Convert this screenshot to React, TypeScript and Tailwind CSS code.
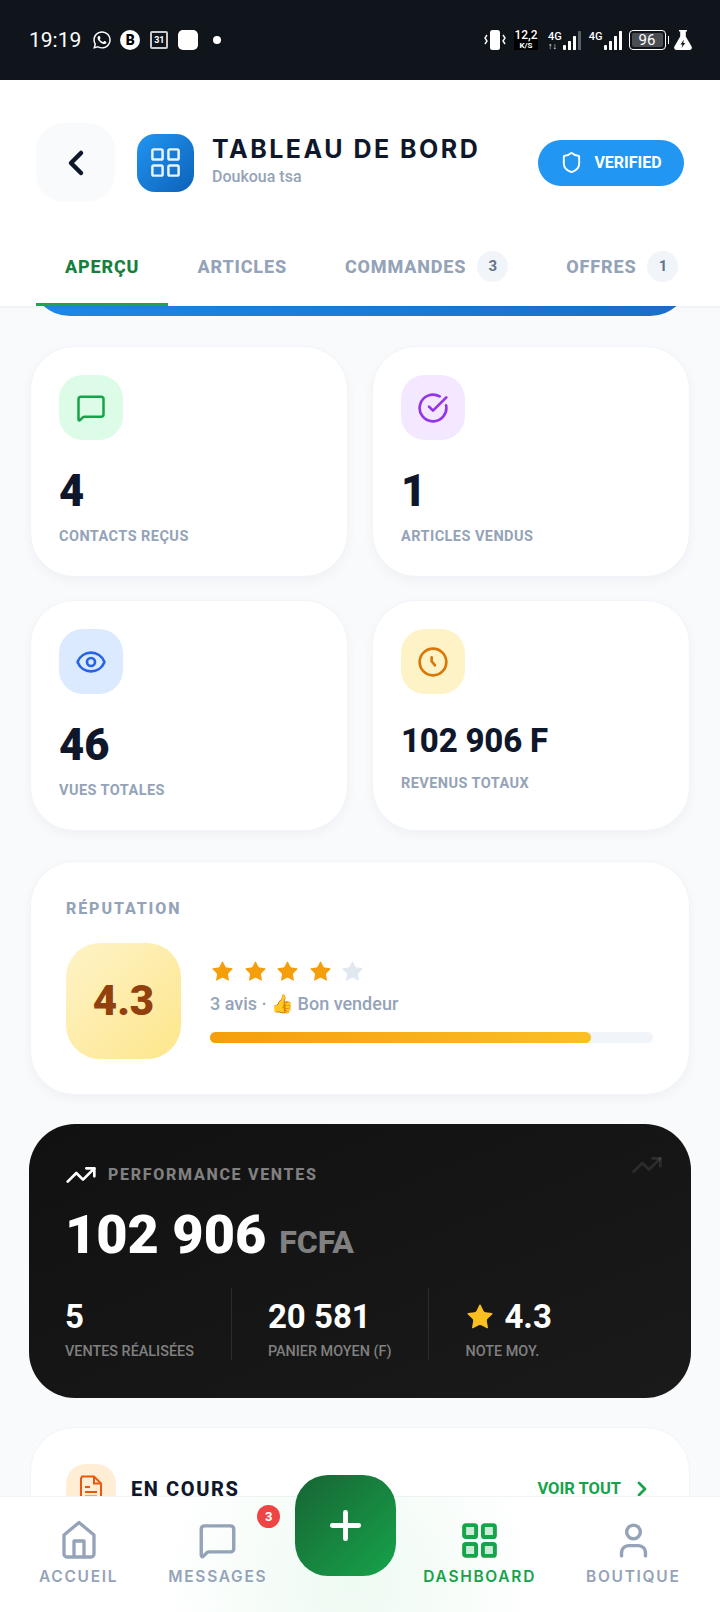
import { CircleCheckBig, ChevronLeft, ChevronRight, Eye, LayoutGrid, MessageSquare, Plus, Shield, Star, TrendingUp, User } from 'lucide-react'
import { FaWhatsapp } from 'react-icons/fa'

function Signal({ dim }: { dim?: boolean }) {
  return (
    <svg width="19" height="19" viewBox="0 0 19 19" fill="#fff">
      <rect x="0" y="14" width="3" height="5" rx="1" />
      <rect x="5" y="10" width="3" height="9" rx="0.5" />
      <rect x="10" y="5" width="3" height="14" rx="0.5" />
      <rect x="15" y="0" width="3" height="19" rx="0.5" fill={dim ? '#5b6067' : '#fff'} />
    </svg>
  )
}

function StatusBar() {
  return (
    <div className="flex h-[80px] shrink-0 items-center justify-between bg-[#10151c] pl-[29px] pr-[28px] text-white">
      <div className="flex items-center">
        <span className="text-[21px] leading-none">19:19</span>
        <FaWhatsapp className="ml-[11px] text-[20px]" />
        <span className="ml-[8px] flex h-[20px] w-[20px] items-center justify-center rounded-full bg-white text-[14px] font-black leading-none text-black">B</span>
        <span className="ml-[10px] flex h-[18px] w-[18px] items-center justify-center rounded-[2px] border-2 border-[#c9cbce] text-[9px] font-bold leading-none">31</span>
        <span className="ml-[10px] h-[20px] w-[20px] rounded-[5px] bg-white" />
        <span className="ml-[15px] h-[8px] w-[8px] rounded-full bg-white" />
      </div>
      <div className="flex items-center">
        <svg width="22" height="20" viewBox="0 0 22 20" fill="none">
          <rect x="6" y="0" width="10" height="20" rx="2.5" fill="#fff" />
          <path d="M3 5 1 8l2 3-2 3M19 5l2 3-2 3 2 3" stroke="#fff" strokeWidth="1.4" />
        </svg>
        <span className="ml-[8px] flex w-[24px] flex-col items-center bg-black text-[12px] font-medium leading-[11px]">
          <span>12,2</span>
          <span className="text-[8px] font-bold leading-[9px]">K/S</span>
        </span>
        <span className="ml-[10px] flex flex-col text-[11px] font-medium leading-[11px]">
          <span>4G</span>
          <span className="text-[9px] font-bold leading-[8px]">↑↓</span>
        </span>
        <span className="ml-[1px]"><Signal dim /></span>
        <span className="ml-[7px] self-start pt-[1px] text-[11px] font-medium leading-[11px]">4G</span>
        <span className="ml-[1px]"><Signal /></span>
        <span className="ml-[6px] flex h-[20px] w-[37px] items-center justify-center rounded-[4px] border-[1.5px] border-white p-[2px]">
          <span className="flex h-full w-full items-center justify-center rounded-[2px] bg-[#4a4d52] text-[15px] leading-none">96</span>
        </span>
        <span className="ml-[2px] h-[8px] w-[1.5px] bg-white" />
        <svg className="ml-[5px]" width="18" height="20" viewBox="0 0 18 20" fill="#fff">
          <path d="M5 0h8v1.5h-1.2v5L17.6 16.6c.8 1.5-.2 3.4-2 3.4H2.4c-1.8 0-2.8-1.9-2-3.4L6.200 6.500v-5H5z" />
          <path d="M10 9.500 6.500 14.500h2l-1 3.500 3.800-5h-2.100z" fill="#10151c" />
        </svg>
      </div>
    </div>
  )
}

function Tab({ label, count, active }: { label: string; count?: number; active?: boolean }) {
  return (
    <div className={`flex h-[79px] items-center gap-[11px] border-b-[3px] px-[29px] pt-[3px] ${active ? 'border-[#22a054]' : 'border-transparent'}`}>
      <span className={`text-[18px] font-extrabold leading-none tracking-[0.85px] ${active ? 'text-[#15803d]' : 'text-[#94a3b8]'}`}>{label}</span>
      {count !== undefined && (
        <span className="flex h-[31px] w-[31px] items-center justify-center rounded-full bg-[#f1f5f9] text-[15px] font-bold text-[#64748b]">{count}</span>
      )}
    </div>
  )
}

function Header() {
  return (
    <div className="relative z-10 shrink-0 bg-white pt-[43px] shadow-[0_1px_3px_rgba(15,23,42,0.06)]">
      <div className="flex items-center pl-[36px] pr-[36px]">
        <div className="flex h-[79px] w-[79px] items-center justify-center rounded-[28px] bg-[#f8fafc]">
          <ChevronLeft size={40} strokeWidth={2.7} className="text-[#0f172a]" />
        </div>
        <div className="ml-[22px] flex h-[58px] w-[57px] items-center justify-center rounded-[18px] bg-gradient-to-br from-[#2196f3] to-[#0d62b8]">
          <LayoutGrid size={35} strokeWidth={1.7} className="text-[#e8f3fc]" />
        </div>
        <div className="mb-[6px] ml-[18px] flex-1">
          <div className="font-[Inter,sans-serif] text-[25px] font-bold leading-[34px] tracking-[2.500px] text-[#0f172a]">TABLEAU DE BORD</div>
          <div className="text-[16px] font-medium leading-[22px] text-[#94a3b8]">Doukoua tsa</div>
        </div>
        <div className="flex h-[46px] w-[146px] items-center justify-center gap-[11px] rounded-[23px] bg-[#2196f3] text-white">
          <Shield size={23} strokeWidth={2} />
          <span className="text-[16px] font-bold leading-none">VERIFIED</span>
        </div>
      </div>
      <div className="mt-[25px] flex pl-[36px]">
        <Tab label="APERÇU" active />
        <Tab label="ARTICLES" />
        <Tab label="COMMANDES" count={3} />
        <Tab label="OFFRES" count={1} />
      </div>
    </div>
  )
}

function StatCard({ icon, tint, value, label, small }: { icon: React.ReactNode; tint: string; value: string; label: string; small?: boolean }) {
  return (
    <div className="h-[231px] rounded-[44px] border border-[#f1f5f9] bg-white pl-[28px] pt-[28px] shadow-[0_4px_12px_rgba(15,23,42,0.04)]">
      <div className={`flex h-[65px] w-[64px] items-center justify-center rounded-[24px] ${tint}`}>{icon}</div>
      {small ? (
        <div className="mt-[24px] text-[33px] font-extrabold leading-[46px] tracking-[-0.2px] text-[#0f172a]">{value}</div>
      ) : (
        <div className="mt-[24px] text-[43.500px] font-black leading-[56px] text-[#0f172a]">{value}</div>
      )}
      <div className={`text-[14.500px] font-bold leading-[20px] tracking-[0.45px] text-[#94a3b8] ${small ? 'mt-[10px]' : 'mt-[7px]'}`}>{label}</div>
    </div>
  )
}

function Reputation() {
  return (
    <div className="mt-[30px] h-[234px] rounded-[44px] border border-[#f1f5f9] bg-white pl-[35px] pr-[36px] pt-[35px] shadow-[0_4px_12px_rgba(15,23,42,0.04)]">
      <div className="text-[16px] font-extrabold leading-[24px] tracking-[1.900px] text-[#94a3b8]">RÉPUTATION</div>
      <div className="mt-[22px] flex items-center">
        <div className="flex h-[116px] w-[115px] shrink-0 items-center justify-center rounded-[34px] bg-gradient-to-br from-[#fef3c7] to-[#fde68a] text-[42px] font-black leading-none text-[#92400e]">4.3</div>
        <div className="ml-[29px] flex-1 pt-[2px]">
          <div className="flex gap-[11.500px] pl-[2px]">
            {[0, 1, 2, 3, 4].map(i => (
              <Star key={i} size={21} strokeWidth={0} fill={i < 4 ? '#f59e0b' : '#e2e8f0'} className="scale-[1.15]" />
            ))}
          </div>
          <div className="mt-[9px] text-[18px] font-medium leading-[26px] text-[#94a3b8]">3 avis · 👍 Bon vendeur</div>
          <div className="mt-[15px] h-[11px] rounded-full bg-[#f1f5f9]">
            <div className="h-full w-[86%] rounded-full bg-gradient-to-r from-[#f59e0b] to-[#fbbf24]" />
          </div>
        </div>
      </div>
    </div>
  )
}

function PerfStat({ value, label, star, last }: { value: string; label: string; star?: boolean; last?: boolean }) {
  return (
    <div className={`h-[72px] pt-[10px] ${last ? '' : 'mr-[36px] border-r border-[#2c2c2c] pr-[37px]'}`}>
      <div className="flex items-center text-[33px] font-bold leading-[38px] text-white">
        {star && <Star size={30} strokeWidth={0} fill="#fbbf24" className="mr-[9px]" />}
        {value}
      </div>
      <div className="mt-[6px] text-[14.400px] font-medium leading-[20px] text-[#808080]">{label}</div>
    </div>
  )
}

function Performance() {
  return (
    <div className="relative mt-[29px] -mx-px h-[274px] rounded-[46px] bg-gradient-to-br from-[#111111] to-[#1a1a1a] pl-[36px] pt-[35px]">
      <TrendingUp size={32} strokeWidth={2} className="absolute right-[28px] top-[25px] text-white/10" />
      <div className="flex items-center">
        <TrendingUp size={32} strokeWidth={2} className="text-white" />
        <span className="ml-[11px] text-[16px] font-extrabold leading-none tracking-[1.700px] text-[#808080]">PERFORMANCE VENTES</span>
      </div>
      <div className="mt-[12px] flex items-baseline">
        <span className="text-[54px] font-black leading-[64px] text-white">102 906</span>
        <span className="ml-[13px] text-[32px] font-extrabold leading-none text-[#808080]">FCFA</span>
      </div>
      <div className="mt-[21px] flex">
        <PerfStat value="5" label="VENTES RÉALISÉES" />
        <PerfStat value="20 581" label="PANIER MOYEN (F)" />
        <PerfStat value="4.3" label="NOTE MOY." star last />
      </div>
    </div>
  )
}

function OngoingCard() {
  return (
    <div className="mt-[29px] h-[200px] rounded-[44px] border border-[#f1f5f9] bg-white pl-[35px] pr-[35px] pt-[36px]">
      <div className="flex items-center">
        <div className="flex h-[50px] w-[50px] items-center justify-center rounded-[20px] bg-[#ffedd5]">
          <svg width="24" height="28" viewBox="0 0 24 28" fill="none" stroke="#ea580c" strokeWidth="2">
            <path d="M3 1.500h12l7 7V24a2.500 2.500 0 0 1-2.500 2.500h-15A2.500 2.500 0 0 1 2 24V3.500z" />
            <path d="M15 1.500V8.500h7M6 12h5M6 17h12M6 21.500h12" />
          </svg>
        </div>
        <span className="ml-[15px] flex-1 text-[20px] font-extrabold leading-none tracking-[1.6px] text-[#0f172a]">EN COURS</span>
        <span className="text-[16.500px] font-bold leading-none text-[#16a34a]">VOIR TOUT</span>
        <ChevronRight size={24} strokeWidth={2.700} className="ml-[9px] text-[#16a34a]" />
      </div>
    </div>
  )
}

function NavItem({ icon, label, active, className }: { icon: React.ReactNode; label: string; active?: boolean; className?: string }) {
  return (
    <div className={`flex flex-col items-center pt-[22px] ${className ?? ''}`}>
      <div className="flex h-[42px] items-center justify-center">{icon}</div>
      <span className={`mt-[6px] font-[Inter,sans-serif] text-[15.500px] font-semibold leading-[20px] tracking-[1.700px] ${active ? 'text-[#16a34a]' : 'text-[#94a3b8]'}`}>{label}</span>
    </div>
  )
}

function BottomNav() {
  return (
    <div className="relative z-20 flex h-[116px] shrink-0 items-start border-t border-[#f1f5f9] bg-white pl-[39px]">
      <div className="pointer-events-none absolute bottom-0 left-[150px] h-[116px] w-[400px] bg-[radial-gradient(circle_190px_at_50%_75%,rgba(34,197,94,0.08),rgba(34,197,94,0))]" />
      <NavItem
        label="ACCUEIL"
        className="relative"
        icon={
          <svg width="36" height="40" viewBox="0 0 36 40" fill="none" stroke="#94a3b8" strokeWidth="3.300" strokeLinejoin="round">
            <path d="M3 15 18 2.500 33 15v19a3 3 0 0 1-3 3H6a3 3 0 0 1-3-3z" />
            <path d="M13 37V21h10v16" />
          </svg>
        }
      />
      <div className="relative ml-[50px]">
        <NavItem label="MESSAGES" icon={<MessageSquare size={39} strokeWidth={2.1} className="text-[#94a3b8]" />} />
        <span className="absolute -right-[13px] top-[8px] flex h-[23px] w-[23px] items-center justify-center rounded-full bg-[#ef4444] text-[13px] font-bold leading-none text-white">3</span>
      </div>
      <div className="relative -mt-[22px] ml-[28px] flex h-[101px] w-[101px] items-center justify-center rounded-[33px] bg-gradient-to-br from-[#166534] to-[#16a34a]">
        <Plus size={45} strokeWidth={2.600} className="text-white" />
      </div>
      <NavItem label="DASHBOARD" active className="relative ml-[27px]" icon={<LayoutGrid size={41} strokeWidth={2.3} fill="#16a34a33" className="text-[#16a34a]" />} />
      <NavItem label="BOUTIQUE" className="relative ml-[50px]" icon={<User size={41} strokeWidth={2} className="text-[#94a3b8]" />} />
    </div>
  )
}

export default function App() {
  return (
    <div className="flex h-[1612px] w-[720px] flex-col overflow-hidden bg-[#f8fafc] font-[Roboto,sans-serif]">
      <StatusBar />
      <Header />
      <div className="min-h-0 flex-1 overflow-hidden px-[30px]">
        <div className="-mt-[40px] h-[50px] rounded-b-[40px] bg-gradient-to-r from-[#1e88e5] to-[#1a6fc4]" />
        <div className="mt-[30px] grid grid-cols-2 gap-x-[24px] gap-y-[23px]">
          <StatCard tint="bg-[#dcfce7]" value="4" label="CONTACTS REÇUS" icon={<MessageSquare size={30} strokeWidth={2} className="text-[#16a34a]" />} />
          <StatCard tint="bg-[#f3e8ff]" value="1" label="ARTICLES VENDUS" icon={<CircleCheckBig size={32} strokeWidth={2} className="text-[#9333ea]" />} />
          <StatCard tint="bg-[#dbeafe]" value="46" label="VUES TOTALES" icon={<Eye size={32} strokeWidth={2} className="text-[#2563eb]" />} />
          <StatCard
            small
            tint="bg-[#fef3c7]"
            value="102 906 F"
            label="REVENUS TOTAUX"
            icon={
              <svg width="32" height="32" viewBox="0 0 24 24" fill="none" stroke="#d97706" strokeWidth="2" strokeLinecap="round">
                <circle cx="12" cy="12" r="10" />
                <path d="M11 8.500v3l2.500 3" />
              </svg>
            }
          />
        </div>
        <Reputation />
        <Performance />
        <OngoingCard />
      </div>
      <BottomNav />
    </div>
  )
}
